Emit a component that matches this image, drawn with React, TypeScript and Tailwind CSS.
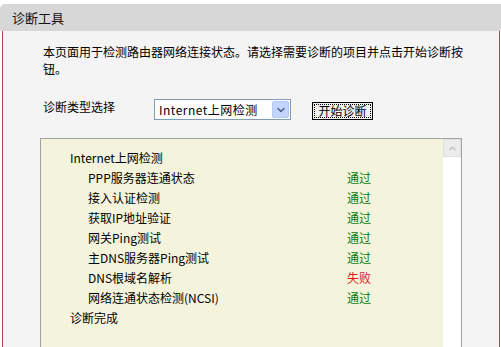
import { ChevronDown, ChevronUp } from 'lucide-react';

const items = [
  { name: 'PPP服务器连通状态', ok: true },
  { name: '接入认证检测', ok: true },
  { name: '获取IP地址验证', ok: true },
  { name: '网关Ping测试', ok: true },
  { name: '主DNS服务器Ping测试', ok: true },
  { name: 'DNS根域名解析', ok: false },
  { name: '网络连通状态检测(NCSI)', ok: true },
];

export default function App() {
  return (
    <div
      className="w-[501px] h-[347px] bg-white overflow-hidden flex flex-col pt-[4px] text-[12px] text-black"
      style={{ fontFamily: '"Noto Sans CJK SC", "Liberation Sans", sans-serif' }}
    >
      {/* Title bar */}
      <div className="h-[27px] bg-[#d7d7d7] rounded-tl-[5px] flex items-center pl-[12px] text-[13px] text-[#111]">
        诊断工具
      </div>

      {/* Panel */}
      <div className="flex-1 ml-[2px] mr-[1px] border-l border-r border-[#b04848] bg-[#f4f4f4] flex flex-col min-h-0">
        <p className="w-[421px] ml-[40px] mt-[12px] leading-[17px]">
          本页面用于检测路由器网络连接状态。请选择需要诊断的项目并点击开始诊断按钮。
        </p>

        <div className="flex items-center ml-[40px] mt-[22px] h-[21px]">
          <span className="w-[111px] -mt-[5px]">诊断类型选择</span>
          <div className="w-[137px] h-[21px] border border-[#7f9db9] bg-white flex items-center pl-[4px] pr-[1px]">
            <span className="flex-1 tracking-[0.5px]">Internet上网检测</span>
            <div className="w-[17px] h-[17px] rounded-[2px] bg-[#c3d5fd] border border-[#b4c8f4] flex items-center justify-center">
              <ChevronDown size={12} strokeWidth={3} className="text-[#4d6185]" />
            </div>
          </div>
          <button className="ml-[21px] mt-[3px] h-[18px] w-[61px] border border-black bg-[#f0f0f0] p-[1px] flex">
            <span className="flex-1 border border-dotted border-black flex items-center justify-center leading-none">
              开始诊断
            </span>
          </button>
        </div>

        {/* Result box */}
        <div className="ml-[37px] w-[422px] mt-[18px] flex-1 border-t border-l border-r border-[#a3a3a3] bg-[#f4f4dd] flex min-h-0">
          <div className="flex-1 pt-[9px] pl-[29px] leading-[20px]">
            <div>Internet上网检测</div>
            {items.map((it) => (
              <div key={it.name} className="flex pl-[18px]">
                <span className="w-[259px]">{it.name}</span>
                <span className={it.ok ? 'text-[#0b780b]' : 'text-[#d81c1c]'}>
                  {it.ok ? '通过' : '失败'}
                </span>
              </div>
            ))}
            <div>诊断完成</div>
          </div>
          <div className="w-[18px] bg-white flex flex-col">
            <div className="h-[18px] bg-[#ececec] border border-[#e0e0e0] flex items-center justify-center">
              <ChevronUp size={11} strokeWidth={2.5} className="text-[#b8b8b8]" />
            </div>
          </div>
        </div>
      </div>
    </div>
  );
}
